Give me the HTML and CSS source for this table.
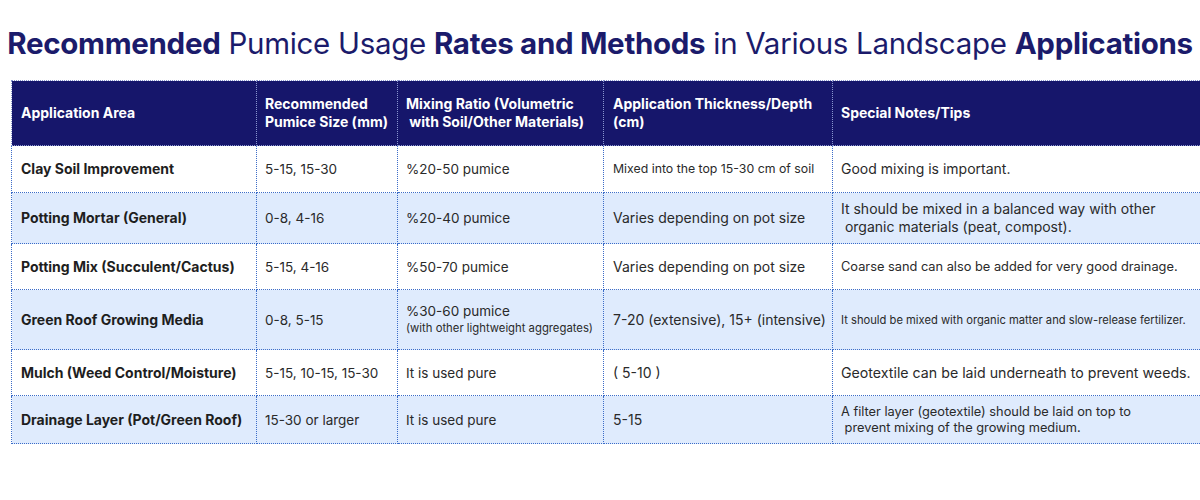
FILE: index.html
```html
<!DOCTYPE html>
<html lang="en">
<head>
<meta charset="utf-8">
<title>Pumice Usage Rates</title>
<link rel="stylesheet" href="styles.css">
</head>
<body>
<div class="page">
  <h1 class="title"><b>Recommended</b> Pumice Usage <b>Rates and Methods</b> in Various Landscape <b>Applications</b></h1>
  <div class="table-wrap">
    <table class="usage">
      <colgroup>
        <col class="c1"><col class="c2"><col class="c3"><col class="c4"><col class="c5">
      </colgroup>
      <thead>
        <tr class="h">
          <th>Application Area</th>
          <th>Recommended<br>Pumice Size (mm)</th>
          <th>Mixing Ratio (Volumetric<br>&nbsp;with Soil/Other Materials)</th>
          <th>Application Thickness/Depth<br>(cm)</th>
          <th>Special Notes/Tips</th>
        </tr>
      </thead>
      <tbody>
        <tr class="r1">
          <td class="area">Clay Soil Improvement</td>
          <td class="num">5-15, 15-30</td>
          <td class="num">%20-50 pumice</td>
          <td class="sm">Mixed into the top 15-30 cm of soil</td>
          <td>Good mixing is important.</td>
        </tr>
        <tr class="r2 alt">
          <td class="area">Potting Mortar (General)</td>
          <td class="num">0-8, 4-16</td>
          <td class="num">%20-40 pumice</td>
          <td>Varies depending on pot size</td>
          <td class="two">It should be mixed in a balanced way with other<br>&nbsp;organic materials (peat, compost).</td>
        </tr>
        <tr class="r3">
          <td class="area">Potting Mix (Succulent/Cactus)</td>
          <td class="num">5-15, 4-16</td>
          <td class="num">%50-70 pumice</td>
          <td>Varies depending on pot size</td>
          <td class="sm2">Coarse sand can also be added for very good drainage.</td>
        </tr>
        <tr class="r4 alt">
          <td class="area">Green Roof Growing Media</td>
          <td class="num">0-8, 5-15</td>
          <td class="num stack">%30-60 pumice<br><span class="note">(with other lightweight aggregates)</span></td>
          <td>7-20 (extensive), 15+ (intensive)</td>
          <td class="xs">It should be mixed with organic matter and slow-release fertilizer.</td>
        </tr>
        <tr class="r5">
          <td class="area">Mulch (Weed Control/Moisture)</td>
          <td class="num">5-15, 10-15, 15-30</td>
          <td class="num">It is used pure</td>
          <td>( 5-10 )</td>
          <td class="lg">Geotextile can be laid underneath to prevent weeds.</td>
        </tr>
        <tr class="r6 alt">
          <td class="area">Drainage Layer (Pot/Green Roof)</td>
          <td class="num">15-30 or larger</td>
          <td class="num">It is used pure</td>
          <td>5-15</td>
          <td class="two sm3">A filter layer (geotextile) should be laid on top to<br>&nbsp;prevent mixing of the growing medium.</td>
        </tr>
      </tbody>
    </table>
  </div>
</div>
</body>
</html>
```

FILE: styles.css
```css
html, body {
  margin: 0;
  padding: 0;
  background: #ffffff;
}

body {
  font-family: Inter, "Open Sans", sans-serif;
  color: #2a2a2a;
  width: 1200px;
  height: 500px;
  overflow: hidden;
}

.page {
  padding-top: 25px;
}

.title {
  margin: 0;
  text-align: center;
  font-size: 29.5px;
  line-height: 36px;
  font-weight: 400;
  letter-spacing: -0.3px;
  color: #1b1b6b;
  white-space: nowrap;
}

.title b {
  font-weight: 700;
}

.table-wrap {
  margin-top: 19px;
  padding-left: 11px;
  overflow: hidden;
}

.usage {
  border-collapse: collapse;
  table-layout: fixed;
  width: 1200px;
}

.c1 { width: 245px; }
.c2 { width: 141px; }
.c3 { width: 206px; }
.c4 { width: 229px; }
.c5 { width: 379px; }

.usage th,
.usage td {
  border: 1px dotted #3b6cc8;
  padding: 0 8px;
  text-align: left;
  vertical-align: middle;
  white-space: nowrap;
  font-size: 14px;
  line-height: 18px;
}

.usage th {
  background: #16166b;
  color: #ffffff;
  font-weight: 700;
  font-size: 14px;
  border-color: #8a96d0;
}

.usage td:first-child,
.usage th:first-child {
  padding-left: 9px;
}

.usage td:nth-child(4),
.usage th:nth-child(4) {
  padding-left: 9px;
}

.h { height: 65px; }
.r1 { height: 47px; }
.r2 { height: 51px; }
.r3 { height: 46px; }
.r4 { height: 60px; }
.r5 { height: 46px; }
.r6 { height: 48px; }

.alt td {
  background: #dfebfd;
}

.area {
  font-weight: 700;
  color: #1e1e1e;
}

.usage td.num { font-size: 13.5px; }
.usage td.sm { font-size: 12.3px; }
.usage td.sm2 { font-size: 12.8px; }
.usage td.xs { font-size: 11.2px; }
.usage td.lg { font-size: 14.2px; }
.usage td.sm3 { font-size: 12.8px; line-height: 16px; }

.usage td.stack {
  line-height: 16px;
}

.note {
  font-size: 11.3px;
}
```
